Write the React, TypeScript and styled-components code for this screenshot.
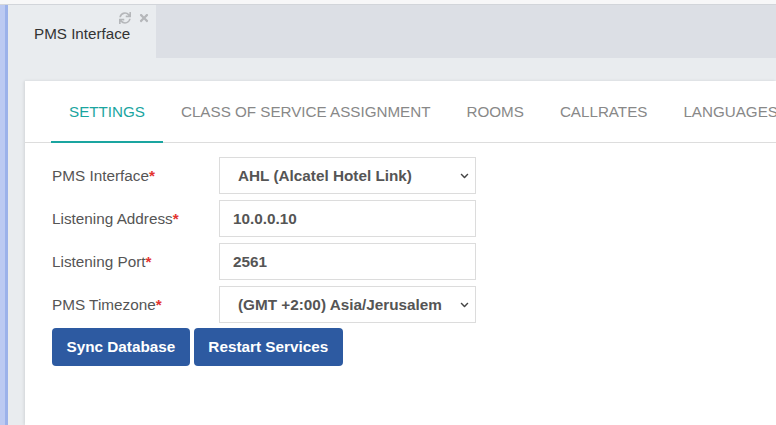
import styled, { createGlobalStyle } from "styled-components";
import { FaSync, FaTimes, FaChevronDown } from "react-icons/fa";

const GlobalStyle = createGlobalStyle`
  html, body {
    margin: 0;
    padding: 0;
    overflow: hidden;
  }
  body {
    font-family: "Liberation Sans", Arial, sans-serif;
    background: #e9ecef;
  }
`;

const tabs = [
  "SETTINGS",
  "CLASS OF SERVICE ASSIGNMENT",
  "ROOMS",
  "CALLRATES",
  "LANGUAGES",
];

function App() {
  return (
    <>
      <GlobalStyle />
      <Page>
        <TopStrip />
        <Body>
          <SideStrip />
          <Main>
            <TabBar>
              <WindowTab>
                <TabIcons>
                  <FaSync />
                  <FaTimes />
                </TabIcons>
                PMS Interface
              </WindowTab>
              <TabFiller />
            </TabBar>
            <Content>
              <Card>
                <Nav>
                  {tabs.map((t, i) => (
                    <NavItem key={t} $active={i === 0}>
                      {t}
                    </NavItem>
                  ))}
                </Nav>
                <Form>
                  <Row>
                    <Label>
                      PMS Interface<Req>*</Req>
                    </Label>
                    <SelectWrap>
                      <Select defaultValue="ahl">
                        <option value="ahl">AHL (Alcatel Hotel Link)</option>
                      </Select>
                      <Chevron>
                        <FaChevronDown />
                      </Chevron>
                    </SelectWrap>
                  </Row>
                  <Row>
                    <Label>
                      Listening Address<Req>*</Req>
                    </Label>
                    <Input defaultValue="10.0.0.10" />
                  </Row>
                  <Row>
                    <Label>
                      Listening Port<Req>*</Req>
                    </Label>
                    <Input defaultValue="2561" />
                  </Row>
                  <Row>
                    <Label>
                      PMS Timezone<Req>*</Req>
                    </Label>
                    <SelectWrap>
                      <Select defaultValue="jer">
                        <option value="jer">(GMT +2:00) Asia/Jerusalem</option>
                      </Select>
                      <Chevron>
                        <FaChevronDown />
                      </Chevron>
                    </SelectWrap>
                  </Row>
                  <Buttons>
                    <Button>Sync Database</Button>
                    <Button>Restart Services</Button>
                  </Buttons>
                </Form>
              </Card>
            </Content>
          </Main>
        </Body>
      </Page>
    </>
  );
}

const Page = styled.div`
  display: flex;
  flex-direction: column;
  width: 776px;
  height: 425px;
`;

const TopStrip = styled.div`
  height: 4px;
  background: #f7f7f8;
  border-bottom: 1px solid #d2d5da;
  flex-shrink: 0;
`;

const Body = styled.div`
  display: flex;
  flex: 1;
  min-height: 0;
`;

const SideStrip = styled.div`
  width: 3px;
  border-left: 5px solid #bccaf2;
  background: #9cb2ea;
  flex-shrink: 0;
`;

const Main = styled.div`
  flex: 1;
  display: flex;
  flex-direction: column;
  min-width: 0;
`;

const TabBar = styled.div`
  display: flex;
  height: 53px;
  flex-shrink: 0;
`;

const WindowTab = styled.div`
  position: relative;
  width: 148px;
  box-sizing: border-box;
  padding: 20px 0 0 26px;
  background: #e9ecef;
  color: #333;
  font-size: 15.2px;
`;

const TabIcons = styled.div`
  position: absolute;
  top: 7px;
  right: 6px;
  display: flex;
  gap: 7px;
  color: #b5b7ba;
  font-size: 12px;
`;

const TabFiller = styled.div`
  flex: 1;
  background: #dcdfe5;
`;

const Content = styled.div`
  flex: 1;
  display: flex;
  padding: 23px 0 0 17px;
  min-height: 0;
`;

const Card = styled.div`
  flex: 1;
  background: #fff;
  box-shadow: -1px 0 3px rgba(0, 0, 0, 0.1);
  min-width: 0;
  overflow: hidden;
`;

const Nav = styled.div`
  display: flex;
  height: 61px;
  padding-left: 26px;
  border-bottom: 1px solid #dddddd;
  white-space: nowrap;
`;

const NavItem = styled.div<{ $active?: boolean }>`
  display: flex;
  align-items: center;
  padding: 0 18px;
  font-size: 15.2px;
  color: ${(p) => (p.$active ? "#1aa5a0" : "#888888")};
  border-bottom: 2px solid ${(p) => (p.$active ? "#1aa5a0" : "transparent")};
  margin-bottom: -1px;
`;

const Form = styled.div`
  display: flex;
  flex-direction: column;
  gap: 6px;
  padding: 14px 0 0 27px;
`;

const Row = styled.div`
  display: flex;
  align-items: center;
  height: 37px;
`;

const Label = styled.div`
  width: 167px;
  font-size: 15.3px;
  color: #555;
`;

const Req = styled.span`
  color: #e3342f;
  font-weight: bold;
`;

const fieldCss = `
  width: 257px;
  height: 37px;
  box-sizing: border-box;
  border: 1px solid #dcdcdc;
  background: #fff;
  font-family: "Liberation Sans", Arial, sans-serif;
  font-size: 15.3px;
  font-weight: bold;
  color: #555;
  outline: none;
`;

const Input = styled.input`
  ${fieldCss}
  padding: 0 13px;
`;

const SelectWrap = styled.div`
  position: relative;
  display: flex;
`;

const Select = styled.select`
  ${fieldCss}
  appearance: none;
  padding: 0 30px 0 18px;
`;

const Chevron = styled.span`
  position: absolute;
  right: 7px;
  top: 50%;
  transform: translateY(-50%);
  display: flex;
  font-size: 9px;
  color: #444;
  pointer-events: none;
`;

const Buttons = styled.div`
  display: flex;
  gap: 4px;
`;

const Button = styled.button`
  height: 38px;
  padding: 0 14.5px;
  border: none;
  border-radius: 4px;
  background: #2d5aa1;
  color: #fff;
  font-family: "Liberation Sans", Arial, sans-serif;
  font-size: 15.3px;
  font-weight: bold;
  margin-top: -1px;
`;

export default App;
